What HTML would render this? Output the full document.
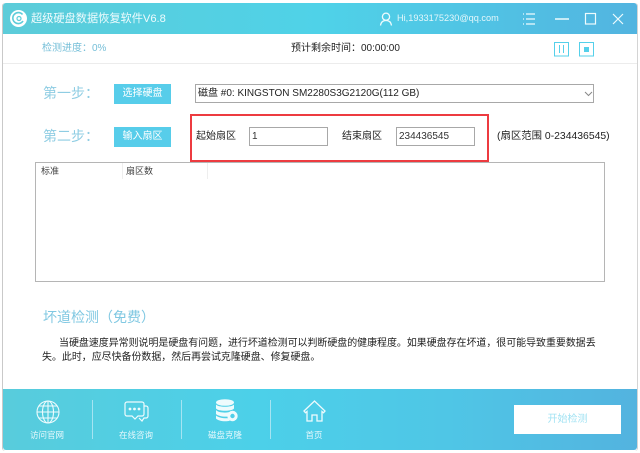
<!DOCTYPE html>
<html><head><meta charset="utf-8">
<style>
html,body{margin:0;padding:0;background:#fff}
body{width:640px;height:453px;position:relative;overflow:hidden;font-family:"Liberation Sans","Noto Sans CJK SC",sans-serif;color:#333}
#w{position:absolute;left:0;top:0;width:640px;height:453px;filter:blur(.3px)}
.a{position:absolute;white-space:nowrap}
.t{font-size:10px;line-height:14px}
.btn{position:absolute;left:114px;width:57px;height:20px;background:#4fcbe9;color:#fff;font-size:10px;line-height:20px;text-align:center;opacity:.95}
.inp{position:absolute;height:17px;background:#fff;border:1px solid #a8a8a8;font-size:10px;line-height:17px;padding-left:2px;box-sizing:content-box;color:#333}
.foot{position:absolute;top:429px;color:#e6f8fc;font-size:8.5px;line-height:12px;text-align:center;width:60px}
.sep{position:absolute;top:400px;width:1px;height:39px;background:#a5e4f2}
</style></head><body><div id="w">
<div class="a" style="left:2px;top:3px;width:636px;height:448px;background:#fff;border-left:1px solid #c9c9c9;border-right:1px solid #d4d4d4;border-radius:3px;box-sizing:border-box"></div>
<div class="a" style="left:3px;top:3px;width:634px;height:31px;background:linear-gradient(90deg,#5cccd9 0%,#4fd2e8 50%,#52b4e0 100%);border-radius:3px 3px 0 0"></div>
<svg class="a" style="left:9px;top:9px" width="19" height="19" viewBox="0 0 19 19"><circle cx="9.5" cy="9.5" r="8.5" fill="#fff"/><path d="M13.5 5.500a5.500 5.500 0 1 0 .5 6.500" fill="none" stroke="#5cccd9" stroke-width="1.600"/><circle cx="10" cy="9.500" r="2" fill="none" stroke="#5cccd9" stroke-width="1.200"/></svg>
<div class="a" style="left:31px;top:11px;font-size:11.2px;line-height:16px;color:#eefbfd">超级硬盘数据恢复软件V6.8</div>
<svg class="a" style="left:379px;top:12px" width="14" height="14" viewBox="0 0 14 14" fill="none" stroke="#eefbfd" stroke-width="1.3"><circle cx="7" cy="4.700" r="3.600"/><path d="M1.500 13.500c.5-3.600 2.700-5 5.500-5s5 1.400 5.500 5"/></svg>
<div class="a" style="left:397px;top:12px;font-size:9.200px;line-height:13px;color:#e3f7fb">Hi,1933175230@qq.com</div>
<svg class="a" style="left:521px;top:12px" width="115" height="14" viewBox="0 0 115 14" fill="none" stroke="#eefbfd" stroke-width="1.200"><path d="M5 2h9M5 7h9M5 12h9M2 2h1M2 7h1M2 12h1"/><path d="M34 7h14" stroke-width="1.500"/><rect x="64.500" y="1.500" width="10" height="10.500"/><path d="M92 2l10 10M102 2l-10 10"/></svg>
<div class="a t" style="left:42px;top:42px;color:#76bfd8">检测进度：0%</div>
<div class="a t" style="left:291px;top:42px;color:#222">预计剩余时间：00:00:00</div>
<svg class="a" style="left:554px;top:41px" width="42" height="16" viewBox="0 0 42 16" fill="none" stroke="#55d0ea" stroke-width="1"><rect x=".5" y="1.500" width="14" height="13.500"/><path d="M5.500 4v8M9.500 4v8"/><rect x="25.500" y="1.500" width="14" height="13.500"/><rect x="30" y="6" width="5" height="5" fill="#55d0ea" stroke="none"/></svg>
<div class="a" style="left:3px;top:63px;width:634px;height:1px;background:#ececec"></div>

<div class="a" style="left:43px;top:84px;font-size:14px;line-height:18px;color:#8fcde3">第一步：</div>
<div class="btn" style="top:84px">选择硬盘</div>
<div class="a" style="left:195px;top:84px;width:399px;height:19px;box-sizing:border-box;border:1px solid #a8a8a8;background:#fff;font-size:10px;line-height:17px;padding-left:2px;color:#222">磁盘 #0: KINGSTON SM2280S3G2120G(112 GB)</div>
<svg class="a" style="left:584px;top:91px" width="9" height="6" viewBox="0 0 9 6" fill="none" stroke="#888" stroke-width="1"><path d="M1 1l3.500 3.500L8 1"/></svg>

<div class="a" style="left:43px;top:127px;font-size:14px;line-height:18px;color:#8fcde3">第二步：</div>
<div class="btn" style="top:127px">输入扇区</div>
<div class="a" style="left:190px;top:114px;width:299px;height:48px;border:2px solid #ed3b40;box-sizing:border-box"></div>
<div class="a t" style="left:196px;top:130px;color:#222">起始扇区</div>
<div class="inp" style="left:249px;top:127px;width:75px">1</div>
<div class="a t" style="left:342px;top:130px;color:#222">结束扇区</div>
<div class="inp" style="left:396px;top:127px;width:75px">234436545</div>
<div class="a" style="left:497px;top:130px;font-size:10.400px;line-height:14px;color:#222">(扇区范围 0-234436545)</div>

<div class="a" style="left:35px;top:162px;width:570px;height:120px;box-sizing:border-box;border:1px solid #b5b5b5;background:#fff"></div>
<div class="a" style="left:41px;top:165px;font-size:9px;line-height:13px;color:#444">标准</div>
<div class="a" style="left:126px;top:165px;font-size:9px;line-height:13px;color:#444">扇区数</div>
<div class="a" style="left:122px;top:163px;width:1px;height:16px;background:#eee"></div>
<div class="a" style="left:207px;top:163px;width:1px;height:16px;background:#eee"></div>

<div class="a" style="left:43px;top:308px;font-size:14px;line-height:18px;color:#80c8e2">坏道检测（免费）</div>
<div class="a" style="left:59px;top:337px;font-size:9.950px;line-height:14px;color:#222">当硬盘速度异常则说明是硬盘有问题，进行坏道检测可以判断硬盘的健康程度。如果硬盘存在坏道，很可能导致重要数据丢</div>
<div class="a" style="left:42px;top:351px;font-size:9.950px;line-height:14px;color:#222">失。此时，应尽快备份数据，然后再尝试克隆硬盘、修复硬盘。</div>

<div class="a" style="left:3px;top:389px;width:634px;height:61px;background:linear-gradient(90deg,#58ccdc 0%,#4cd0e9 40%,#4fc6e6 70%,#53b3df 100%);border-radius:0 0 3px 3px"></div>
<svg class="a" style="left:36px;top:400px" width="24" height="24" viewBox="0 0 24 24" fill="none" stroke="#eefbfd" stroke-width="1.100"><circle cx="12" cy="12" r="11"/><ellipse cx="12" cy="12" rx="5.500" ry="11"/><path d="M12 1v22M1 12h22M3 6h18M3 18h18"/></svg>
<div class="foot" style="left:17px">访问官网</div>
<div class="sep" style="left:92px"></div>
<svg class="a" style="left:124px;top:401px" width="25" height="24" viewBox="0 0 25 24" fill="none" stroke="#eefbfd" stroke-width="1.200"><path d="M3 1h15a2 2 0 0 1 2 2v10a2 2 0 0 1-2 2h-4l-3 3-3-3H3a2 2 0 0 1-2-2V3a2 2 0 0 1 2-2z"/><path d="M20 5h2a2 2 0 0 1 2 2v8a2 2 0 0 1-2 2h-2l-2 3-3-3"/><circle cx="6" cy="8" r=".8" fill="#eefbfd"/><circle cx="10.500" cy="8" r=".8" fill="#eefbfd"/><circle cx="15" cy="8" r=".8" fill="#eefbfd"/></svg>
<div class="foot" style="left:106px">在线咨询</div>
<div class="sep" style="left:181px"></div>
<svg class="a" style="left:215px;top:399px" width="23" height="24" viewBox="0 0 23 24" fill="#eefbfd"><ellipse cx="10" cy="3.500" rx="9" ry="3.300"/><path d="M1 5.500c2 3 16 3 18 0v4c-2 3-16 3-18 0zM1 11c2 3 12 3.200 15 1.500-2 1-3 3-2.800 5C8 18 3 17 1 15zM1 16.500c2 2 7 3 12.500 2.700.3 1 .8 2 1.500 2.500-5 1.300-12 .3-14-2.200z"/><circle cx="17.500" cy="17" r="5.200"/><circle cx="17.500" cy="17" r="2.200" fill="#4fcfe9"/></svg>
<div class="foot" style="left:195px">磁盘克隆</div>
<div class="sep" style="left:270px"></div>
<svg class="a" style="left:303px;top:400px" width="23" height="22" viewBox="0 0 23 22" fill="none" stroke="#eefbfd" stroke-width="1.300"><path d="M1 11L11.500 1 22 11l-1.500 1.700-1.500-1.200V21h-5v-6H9v6H4V11.500l-1.500 1.200z"/></svg>
<div class="foot" style="left:284px">首页</div>
<div class="a" style="left:514px;top:405px;width:107px;height:29px;background:#fff;color:#a3e3f3;font-size:10px;line-height:29px;text-align:center">开始检测</div>
</div></body></html>
